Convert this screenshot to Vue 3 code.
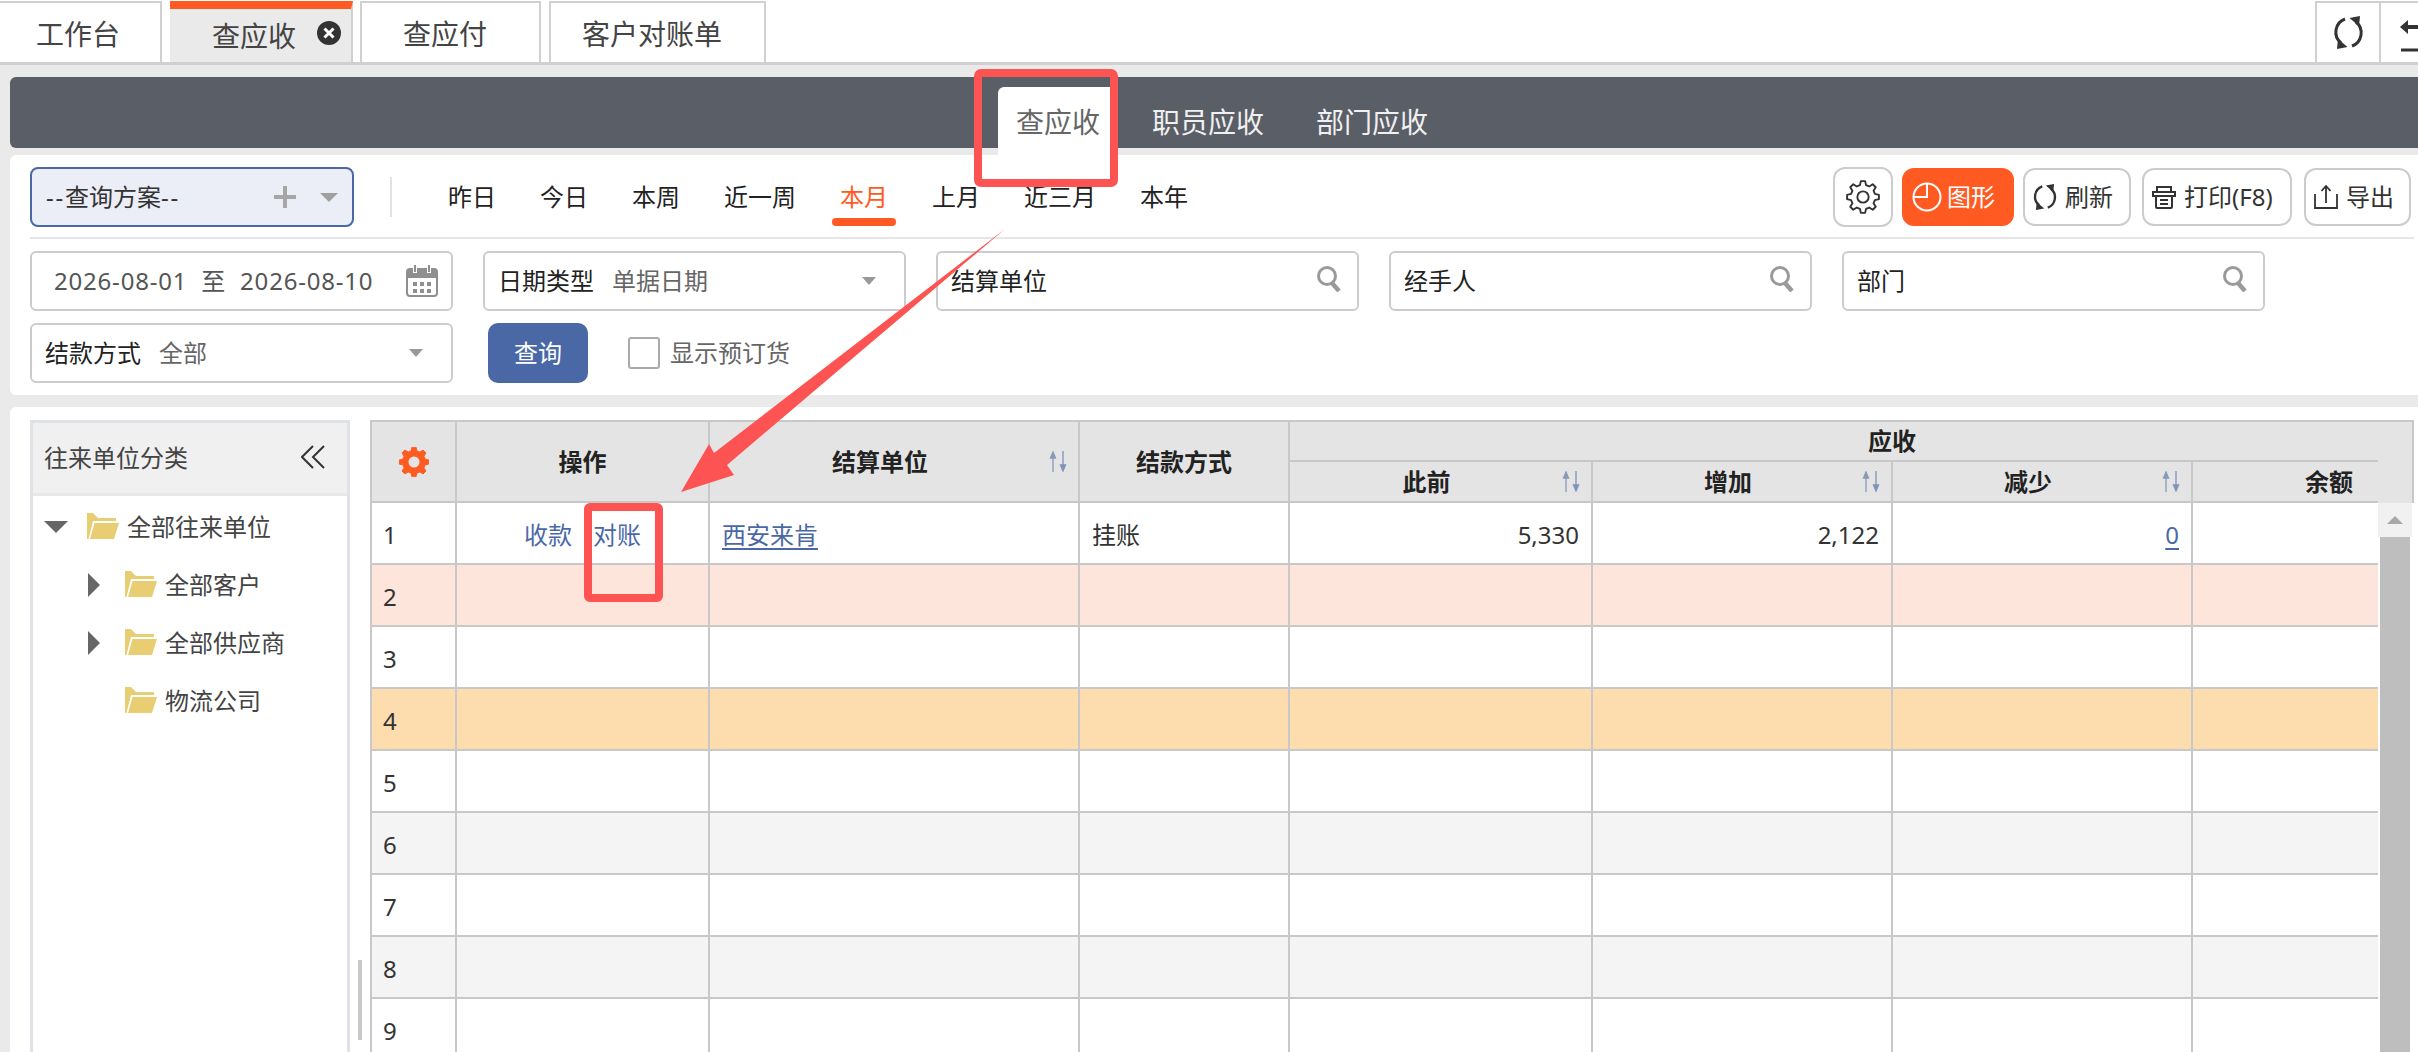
<template>
  <div class="page">
    <!-- 顶部页签 -->
    <div class="tabs">
      <div class="tab tab-home">工作台</div>
      <div class="tab tab-active">
        查应收
        <span class="tab-close">
          <svg width="24" height="24" viewBox="0 0 24 24">
            <circle cx="12" cy="12" r="12" fill="#333" />
            <path d="M7.5 7.5l9 9M16.5 7.5l-9 9" stroke="#fff" stroke-width="3" />
          </svg>
        </span>
      </div>
      <div class="tab tab-pay">查应付</div>
      <div class="tab tab-bill">客户对账单</div>
      <div class="tab-tools">
        <div class="tool-cell">
          <svg width="33" height="33" viewBox="0 0 33 33" fill="none" stroke="#333" stroke-width="3">
            <path d="M13 3A14 14 0 0 0 9 27" />
            <path d="M6 23l9.500 8-10.500 2z" fill="#333" stroke="none" />
            <path d="M20 30A14 14 0 0 0 24 6" />
            <path d="M27 10l-9.500-8 10.500-2z" fill="#333" stroke="none" />
          </svg>
        </div>
        <div class="tool-cell tool-back">
          <svg width="37" height="60" viewBox="0 0 37 60">
            <path d="M19 24l8-7v5h10v4H27v5z" fill="#333" />
            <path d="M20 47h17" stroke="#333" stroke-width="3" />
          </svg>
        </div>
      </div>
    </div>

    <div class="main">
      <!-- 二级导航 -->
      <div class="subnav">
        <div v-for="(item, index) in subTabs" :key="item" class="subnav-item" :class="{ active: index === 0 }">{{ item }}</div>
      </div>

      <!-- 筛选区 -->
      <div class="filter">
        <div class="filter-top">
          <div class="scheme">
            <span><span class="dash">--</span>查询方案<span class="dash">--</span></span>
            <svg class="scheme-plus" width="22" height="22" viewBox="0 0 22 22">
              <path d="M11 0v22M0 11h22" stroke="#a6a6a6" stroke-width="4" />
            </svg>
            <svg width="18" height="9" viewBox="0 0 18 9"><path d="M0 0h18L9 9z" fill="#a0a0a0" /></svg>
          </div>
          <div class="vline"></div>
          <div class="quick">
            <span v-for="item in quickDates" :key="item" class="quick-item" :class="{ active: item === '本月' }">{{ item }}</span>
          </div>
          <div class="actions">
            <button class="btn btn-gear">
              <svg width="34" height="36" viewBox="-18 -18 36 36" fill="none" stroke="#333" stroke-width="2">
                <path :d="gearPath(17, 13, 8)" stroke-linejoin="round" />
                <circle r="6" />
              </svg>
            </button>
            <button class="btn btn-chart">
              <svg width="30" height="30" viewBox="0 0 30 30" fill="none" stroke="#fff" stroke-width="2">
                <circle cx="15" cy="15" r="13.500" />
                <path d="M15 1.500V15H1.500" />
              </svg>
              图形
            </button>
            <button class="btn btn-refresh">
              <svg width="26" height="28" viewBox="0 0 33 33" fill="none" stroke="#333" stroke-width="3">
                <path d="M13 3A14 14 0 0 0 9 27" />
                <path d="M6 23l9.500 8-10.500 2z" fill="#333" stroke="none" />
                <path d="M20 30A14 14 0 0 0 24 6" />
                <path d="M27 10l-9.500-8 10.500-2z" fill="#333" stroke="none" />
              </svg>
              刷新
            </button>
            <button class="btn btn-print">
              <svg width="24" height="24" viewBox="0 0 24 24" fill="none" stroke="#333" stroke-width="2">
                <path d="M5 7V2h14v5" />
                <path d="M1 7h22v4H1zM4 11v11a1 1 0 0 0 1 1h14a1 1 0 0 0 1-1V11" />
                <path d="M8 15h8M8 19h8" />
              </svg>
              打印(F8)
            </button>
            <button class="btn btn-export">
              <svg width="24" height="24" viewBox="0 0 24 24" fill="none" stroke="#333" stroke-width="1.800">
                <path d="M1 9v14h22V9" />
                <path d="M12 18V1M7.500 6L12 1l4.500 5" />
              </svg>
              导出
            </button>
          </div>
        </div>

        <div class="filter-grid">
          <div class="field field-date">
            <span>2026-08-01</span><span>至</span><span>2026-08-10</span>
            <svg class="field-end" width="32" height="32" viewBox="0 0 32 32">
              <rect x="1" y="4" width="30" height="27" rx="3" fill="#fff" stroke="#8f8f8f" stroke-width="2" />
              <path d="M1 7a3 3 0 0 1 3-3h24a3 3 0 0 1 3 3v6H1z" fill="#8f8f8f" />
              <path d="M9 0v8M23 0v8" stroke="#fff" stroke-width="4" />
              <path d="M9 0v7M23 0v7" stroke="#8f8f8f" stroke-width="2" />
              <path d="M7 17h4v4H7zM14 17h4v4h-4zM21 17h4v4h-4zM7 24h4v4H7zM14 24h4v4h-4zM21 24h4v4h-4z" fill="#8f8f8f" />
            </svg>
          </div>
          <div class="field">
            <span class="field-label">日期类型</span><span class="field-value">单据日期</span>
            <svg class="field-end caret" width="14" height="8" viewBox="0 0 14 8"><path d="M0 0h14L7 8z" fill="#999" /></svg>
          </div>
          <div v-for="item in searchFields" :key="item" class="field">
            <span class="field-label">{{ item }}</span>
            <svg class="field-end search" width="26" height="26" viewBox="0 0 26 26" fill="none" stroke="#9a9a9a">
              <circle cx="11" cy="10" r="8.500" stroke-width="3" />
              <path d="M16 17l7 8" stroke-width="4.500" />
            </svg>
          </div>
          <div class="field">
            <span class="field-label">结款方式</span><span class="field-value">全部</span>
            <svg class="field-end caret" width="14" height="8" viewBox="0 0 14 8"><path d="M0 0h14L7 8z" fill="#999" /></svg>
          </div>
          <div class="query-cell">
            <button class="btn-query">查询</button>
            <label class="check"><i></i>显示预订货</label>
          </div>
        </div>
      </div>

      <!-- 内容区 -->
      <div class="content">
        <div class="side">
          <div class="side-head">
            <span>往来单位分类</span>
            <svg width="24" height="24" viewBox="0 0 24 24" fill="none" stroke="#333" stroke-width="2">
              <path d="M12 1L1 12l11 11M23 1L12 12l11 11" />
            </svg>
          </div>
          <div v-for="node in tree" :key="node.name" class="node" :class="'level-' + node.level">
            <span class="node-caret">
              <svg v-if="node.caret === 'down'" width="24" height="12" viewBox="0 0 24 12"><path d="M0 0h24L12 12z" fill="#666" /></svg>
              <svg v-if="node.caret === 'right'" width="12" height="24" viewBox="0 0 12 24"><path d="M0 0l12 12L0 24z" fill="#666" /></svg>
            </span>
            <svg class="folder" width="32" height="26" viewBox="0 0 32 26" fill="#e8cd72">
              <path d="M0 0h6l5 5h18v3H6L1.500 26H0z" />
              <path d="M7.500 10H32l-5 16H3z" />
            </svg>
            <span>{{ node.name }}</span>
          </div>
        </div>

        <div class="splitter"><i></i></div>

        <div class="grid-box">
          <table class="grid">
            <colgroup>
              <col v-for="w in colWidths" :key="w.key" :style="{ width: w.width + 'px' }" />
            </colgroup>
            <thead>
              <tr class="head-a">
                <th rowspan="2">
                  <svg class="head-gear" width="30" height="30" viewBox="-15 -15 30 30">
                    <path :d="gearPath(15, 11.500, 8)" fill="#ff5a22" stroke="#ff5a22" stroke-width="1" stroke-linejoin="round" />
                    <circle r="5.500" fill="#e4e4e4" />
                  </svg>
                </th>
                <th rowspan="2">操作</th>
                <th rowspan="2" class="sortable">结算单位<svg class="sort" width="22" height="21" viewBox="0 0 22 21"><path d="M6 21V2M3.500 7L6 1l2.500 6z" stroke="#8a99b8" stroke-width="1.300" fill="#8a99b8" /><path d="M16 0v19M13.500 14l2.500 6 2.500-6z" stroke="#7f92ba" stroke-width="1.300" fill="#7f92ba" /></svg></th>
                <th rowspan="2">结款方式</th>
                <th colspan="4" class="group">应收</th>
              </tr>
              <tr class="head-b">
                <th v-for="h in sortHeads" :key="h" class="sortable">{{ h }}<svg class="sort" width="22" height="21" viewBox="0 0 22 21"><path d="M6 21V2M3.500 7L6 1l2.500 6z" stroke="#8a99b8" stroke-width="1.300" fill="#8a99b8" /><path d="M16 0v19M13.500 14l2.500 6 2.500-6z" stroke="#7f92ba" stroke-width="1.300" fill="#7f92ba" /></svg></th>
                <th class="last-head">余额</th>
              </tr>
            </thead>
            <tbody>
              <tr v-for="n in 9" :key="n" :class="rowClass(n)">
                <td class="num">{{ n }}</td>
                <td class="ops"><template v-if="n === 1"><a>收款</a><a>对账</a></template></td>
                <td><a v-if="n === 1" class="link">西安来肯</a></td>
                <td>{{ n === 1 ? '挂账' : '' }}</td>
                <td class="right">{{ n === 1 ? '5,330' : '' }}</td>
                <td class="right">{{ n === 1 ? '2,122' : '' }}</td>
                <td class="right"><a v-if="n === 1" class="link">0</a></td>
                <td class="right"></td>
              </tr>
            </tbody>
          </table>
          <div class="vbar">
            <div class="vbar-head"></div>
            <div class="vbar-up"><svg width="16" height="8" viewBox="0 0 16 8"><path d="M8 0l8 8H0z" fill="#a8a8a8" /></svg></div>
            <div class="vbar-thumb"></div>
          </div>
        </div>
      </div>
    </div>

    <!-- 截图上的红色标注 -->
    <svg class="mark" width="2418" height="1052" viewBox="0 0 2418 1052">
      <rect x="978" y="73" width="136" height="110" rx="3" fill="none" stroke="#fd5353" stroke-width="8" />
      <rect x="588" y="507" width="71" height="91" rx="2" fill="none" stroke="#fd5353" stroke-width="8" />
      <path d="M1005 229L727 465l7 10-53 17 28-48 5 9z" fill="#fd5353" />
    </svg>
  </div>
</template>

<script setup>
const subTabs = ['查应收', '职员应收', '部门应收']
const quickDates = ['昨日', '今日', '本周', '近一周', '本月', '上月', '近三月', '本年']
const searchFields = ['结算单位', '经手人', '部门']
const sortHeads = ['此前', '增加', '减少']

const tree = [
  { name: '全部往来单位', level: 0, caret: 'down' },
  { name: '全部客户', level: 1, caret: 'right' },
  { name: '全部供应商', level: 1, caret: 'right' },
  { name: '物流公司', level: 1, caret: '' }
]

const colWidths = [85, 253, 370, 210, 303, 300, 300, 185].map((width, key) => ({ key, width }))

const rowClass = (n) => {
  if (n === 2) return 'row-pink'
  if (n === 4) return 'row-orange'
  if (n === 6 || n === 8) return 'row-gray'
  return ''
}

// 齿轮外形
const gearPath = (outer, inner, teeth) => {
  const step = (Math.PI * 2) / teeth
  let d = ''
  for (let i = 0; i < teeth; i++) {
    const a = i * step - Math.PI / 2
    const pts = [
      [inner, a - step * 0.32],
      [outer, a - step * 0.17],
      [outer, a + step * 0.17],
      [inner, a + step * 0.32]
    ]
    pts.forEach(([r, t], j) => {
      const x = (r * Math.cos(t)).toFixed(2)
      const y = (r * Math.sin(t)).toFixed(2)
      d += (i === 0 && j === 0 ? 'M' : 'L') + x + ' ' + y
    })
  }
  return d + 'Z'
}
</script>

<style scoped>
.page {
  position: relative;
  width: 2418px;
  height: 1052px;
  overflow: hidden;
  background: #eaeaea;
  font-family: "Noto Sans", "Noto Sans CJK SC", sans-serif;
  font-size: 24px;
  line-height: 1;
  color: #333;
}

.tabs {
  display: flex;
  height: 65px;
  padding-top: 1px;
  box-sizing: border-box;
  background: #fff;
  border-bottom: 3px solid #d0d0d0;
}

.tab {
  display: flex;
  align-items: center;
  margin-right: 8px;
  padding-top: 2px;
  border: 2px solid #d0d0d0;
  border-bottom: none;
  box-sizing: border-box;
  font-size: 28px;
  color: #444;
}

.tab-home {
  width: 162px;
  padding-left: 36px;
  border-left: none;
}

.tab-active {
  position: relative;
  width: 183px;
  margin-right: 7px;
  padding-left: 42px;
  padding-top: 0;
  background: #eaeaea;
  border-top: 8px solid #ff5a22;
  border-left: none;
}

.tab-close {
  display: flex;
  margin-left: 21px;
  margin-top: -6px;
}

.tab-pay {
  width: 181px;
  padding-left: 41px;
}

.tab-bill {
  width: 217px;
  padding-left: 31px;
}

.tab-tools {
  display: flex;
  margin-left: auto;
}

.tool-cell {
  display: flex;
  align-items: center;
  justify-content: center;
  width: 66px;
  border: 2px solid #d0d0d0;
  border-bottom: none;
  box-sizing: border-box;
}

.tool-back {
  width: 37px;
  border-left: none;
  border-right: none;
}

.main {
  padding: 12px 0 0 10px;
}

.subnav {
  display: flex;
  justify-content: center;
  align-items: flex-end;
  gap: 16px;
  height: 71px;
  padding-left: 16px;
  box-sizing: border-box;
  background: #5a5e66;
  border-radius: 6px 0 0 6px;
}

.subnav-item {
  display: flex;
  align-items: center;
  justify-content: center;
  height: 61px;
  padding: 8px 18px 0;
  box-sizing: border-box;
  font-size: 28px;
  color: #f0f0f0;
}

.subnav-item.active {
  position: relative;
  background: #fff;
  color: #666;
  border-radius: 6px 6px 0 0;
}

.subnav-item.active::after {
  content: "";
  position: absolute;
  left: 0;
  right: 0;
  top: 100%;
  height: 7px;
  background: #fff;
}

.filter {
  margin-top: 7px;
  height: 240px;
  padding: 13px 4px 0 20px;
  box-sizing: border-box;
  background: #fff;
  border-radius: 6px 0 0 6px;
}

.filter-top {
  display: flex;
  align-items: center;
  height: 71px;
  padding-bottom: 11px;
  box-sizing: border-box;
  border-bottom: 2px solid #e6e6e6;
}

.scheme {
  display: flex;
  align-items: center;
  width: 324px;
  height: 60px;
  padding: 0 14px;
  box-sizing: border-box;
  background: #ebeef7;
  border: 2px solid #4a68a6;
  border-radius: 8px;
  color: #333;
}

.dash {
  letter-spacing: 1.8px;
}

.scheme-plus {
  margin-left: auto;
  margin-right: 24px;
}

.vline {
  width: 2px;
  height: 40px;
  margin-left: 36px;
  background: #e2e2e2;
}

.quick {
  display: flex;
  gap: 44px;
  margin-left: 56px;
}

.quick-item {
  position: relative;
  color: #222;
}

.quick-item.active {
  color: #ff5a22;
}

.quick-item.active::after {
  content: "";
  position: absolute;
  left: -8px;
  right: -8px;
  top: 33px;
  height: 8px;
  border-radius: 4px;
  background: #ff5a22;
}

.actions {
  display: flex;
  align-items: center;
  margin-left: auto;
  padding-right: 3px;
}

.btn {
  display: flex;
  align-items: center;
  gap: 8px;
  height: 58px;
  margin-left: 9px;
  padding: 0 0 0 8px;
  box-sizing: border-box;
  background: #fff;
  border: 2px solid #cccccc;
  border-radius: 12px;
  font: inherit;
  color: #333;
}

.btn-gear {
  justify-content: center;
  width: 60px;
  height: 60px;
  padding: 0;
}

.btn-chart {
  width: 112px;
  gap: 5px;
  background: #ff5a22;
  border-color: #ff5a22;
  color: #fff;
}

.btn-refresh {
  width: 108px;
  padding-left: 7px;
  gap: 7px;
}

.btn-print {
  width: 150px;
  margin-left: 11px;
}

.btn-export {
  width: 107px;
  margin-left: 12px;
}

.filter-grid {
  display: grid;
  grid-template-columns: repeat(5, 423px);
  column-gap: 30px;
  row-gap: 12px;
  margin-top: 12px;
}

.field {
  display: flex;
  align-items: center;
  height: 60px;
  padding: 0 13px;
  box-sizing: border-box;
  border: 2px solid #cccccc;
  border-radius: 6px;
  color: #222;
}

.field-date {
  gap: 14px;
  padding-left: 22px;
  color: #555;
  letter-spacing: 0.8px;
}

.field-label {
  color: #222;
}

.field-value {
  margin-left: 18px;
  color: #666;
}

.field-end {
  margin-left: auto;
}

.caret {
  margin-right: 15px;
}

.search {
  margin-right: 2px;
  margin-top: -4px;
}

.query-cell {
  display: flex;
  align-items: center;
}

.btn-query {
  width: 100px;
  height: 60px;
  margin-left: 5px;
  border: none;
  border-radius: 10px;
  background: #4a68a6;
  font: inherit;
  color: #fff;
}

.check {
  display: flex;
  align-items: center;
  gap: 10px;
  margin-left: 40px;
  color: #666;
}

.check i {
  width: 32px;
  height: 32px;
  box-sizing: border-box;
  border: 2px solid #aaa;
  border-radius: 3px;
}

.content {
  display: flex;
  height: 645px;
  margin-top: 12px;
  padding: 13px 4px 0 20px;
  box-sizing: border-box;
  background: #fff;
  border-radius: 6px 0 0 0;
}

.side {
  width: 320px;
  flex-shrink: 0;
  box-sizing: border-box;
  border: 3px solid #dfe3e8;
  border-bottom: none;
  color: #444;
}

.side-head {
  display: flex;
  align-items: center;
  justify-content: space-between;
  height: 73px;
  padding: 0 22px 0 11px;
  box-sizing: border-box;
  background: #f0f0f0;
  border-bottom: 3px solid #e8e8e8;
}

.side-head svg {
  margin-bottom: 2px;
}

.node {
  display: flex;
  align-items: center;
  height: 58px;
}

.node:nth-child(2) {
  margin-top: 2px;
}

.level-0 {
  padding-left: 11px;
}

.level-1 {
  padding-left: 55px;
}

.node-caret {
  display: flex;
  flex-shrink: 0;
  width: 37px;
}

.level-0 .node-caret {
  width: 43px;
}

.folder {
  margin-right: 8px;
  margin-top: -3px;
}

.splitter {
  width: 20px;
  flex-shrink: 0;
  padding-left: 8px;
  box-sizing: border-box;
}

.splitter i {
  display: block;
  width: 4px;
  height: 80px;
  margin-top: 540px;
  background: #c8c8c8;
}

.grid-box {
  display: flex;
  flex: 1;
  min-width: 0;
  box-sizing: border-box;
  border-top: 2px solid #c8c8c8;
  border-left: 2px solid #c8c8c8;
}

.grid {
  width: 2006px;
  height: 0;
  flex-shrink: 0;
  table-layout: fixed;
  border-collapse: separate;
  border-spacing: 0;
}

.grid th,
.grid td {
  box-sizing: border-box;
  padding: 0;
  border-right: 2px solid #c8c8c8;
  border-bottom: 2px solid #c8c8c8;
}

.grid th {
  position: relative;
  background: #e4e4e4;
  font-weight: 700;
  color: #222;
  text-align: center;
}

.head-a th {
  height: 40px;
}

.head-b th {
  height: 41px;
}

.head-gear {
  display: block;
  margin: 0 auto 0 27px;
}

.grid .group {
  padding-left: 578px;
  text-align: left;
  border-right: none;
}

.grid .sortable {
  padding-right: 28px;
}

.grid .last-head {
  padding-left: 112px;
  text-align: left;
  border-right: none;
}

.sort {
  position: absolute;
  right: 9px;
  top: 50%;
  margin-top: -11px;
}

.grid td {
  height: 62px;
  padding: 3px 12px 0;
  color: #333;
}

.grid td:last-child {
  border-right: none;
}

.row-pink td {
  background: #fde5dc;
}

.row-orange td {
  background: #fddcae;
}

.row-gray td {
  background: #f4f4f4;
}

.grid .num {
  padding-left: 11px;
}

.grid .ops {
  text-align: center;
  color: #4a68a6;
}

.ops a + a {
  margin-left: 21px;
}

.link {
  color: #4a68a6;
  text-decoration: underline;
  text-underline-offset: 4px;
}

.right {
  text-align: right;
}

.vbar {
  width: 36px;
  flex-shrink: 0;
}

.vbar-head {
  height: 81px;
  box-sizing: border-box;
  background: #e4e4e4;
  border-right: 2px solid #c8c8c8;
}

.vbar-up {
  display: flex;
  align-items: center;
  justify-content: center;
  height: 34px;
  background: #f1f1f1;
  margin-right: 2px;
}

.vbar-thumb {
  height: 520px;
  margin: 0 4px 0 2px;
  background: #bebebe;
}

.mark {
  position: absolute;
  left: 0;
  top: 0;
  pointer-events: none;
}
</style>

<style>
html,
body {
  margin: 0;
  overflow: hidden;
}
</style>
